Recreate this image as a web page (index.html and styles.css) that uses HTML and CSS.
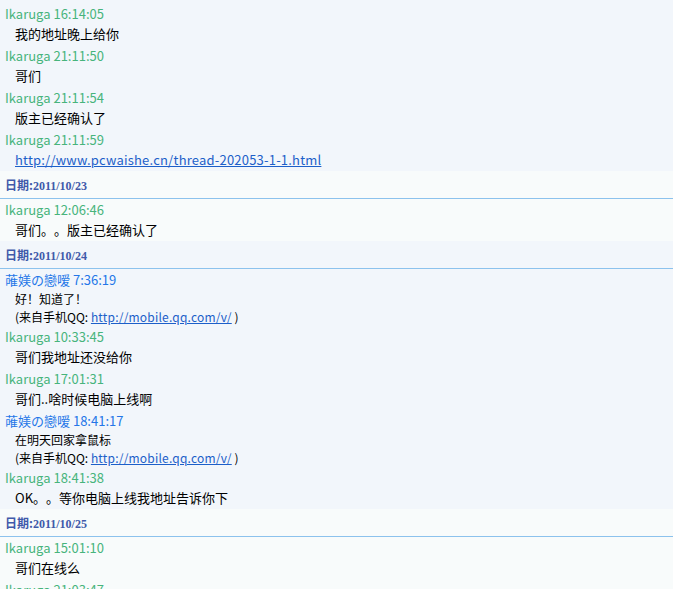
FILE: index.html
```html
<!DOCTYPE html>
<html lang="zh-CN">
<head>
    <meta charset="UTF-8">
    <title>消息记录</title>
    <meta name="viewport" content="width=device-width, initial-scale=1.0">
    <link rel="stylesheet" href="styles.css">
</head>
<body>

<div class="day first">
    <div class="who me">Ikaruga 16:14:05</div>
    <div class="text">我的地址晚上给你</div>
    <div class="who me">Ikaruga 21:11:50</div>
    <div class="text">哥们</div>
    <div class="who me">Ikaruga 21:11:54</div>
    <div class="text">版主已经确认了</div>
    <div class="who me">Ikaruga 21:11:59</div>
    <div class="text"><a href="#">http://www.pcwaishe.cn/thread-202053-1-1.html</a></div>
</div>

<div class="day light">
    <div class="date">日期:<span class="num">2011/10/23</span></div>
    <div class="who me">Ikaruga 12:06:46</div>
    <div class="text">哥们。。版主已经确认了</div>
</div>

<div class="day">
    <div class="date">日期:<span class="num">2011/10/24</span></div>
    <div class="who her">蓶媄の戀嗳 7:36:19</div>
    <div class="text small">
        <div>好！知道了！</div>
        <div>(来自手机QQ: <a href="#">http://mobile.qq.com/v/</a> )</div>
    </div>
    <div class="who me">Ikaruga 10:33:45</div>
    <div class="text">哥们我地址还没给你</div>
    <div class="who me">Ikaruga 17:01:31</div>
    <div class="text">哥们..啥时候电脑上线啊</div>
    <div class="who her">蓶媄の戀嗳 18:41:17</div>
    <div class="text small">
        <div>在明天回家拿鼠标</div>
        <div>(来自手机QQ: <a href="#">http://mobile.qq.com/v/</a> )</div>
    </div>
    <div class="who me">Ikaruga 18:41:38</div>
    <div class="text">OK。。等你电脑上线我地址告诉你下</div>
</div>

<div class="day light">
    <div class="date">日期:<span class="num">2011/10/25</span></div>
    <div class="who me">Ikaruga 15:01:10</div>
    <div class="text">哥们在线么</div>
    <div class="who me">Ikaruga 21:03:47</div>
</div>

</body>
</html>
```

FILE: styles.css
```css
body {
    margin: 0;
    font-family: "Noto Sans CJK SC", sans-serif;
    font-size: 13px;
    color: #000;
    background-color: #f2f6fb;
    overflow: hidden;
    text-spacing-trim: space-all;
}

.day {
    background-color: #f2f6fb;
}

.day.light {
    background-color: #f8fbfb;
}

.day.first {
    padding-top: 3px;
}

.date {
    height: 27px;
    line-height: 27px;
    padding-left: 5px;
    border-bottom: 1px solid #8cc2ed;
    font-size: 12px;
    font-weight: bold;
    color: #4059aa;
}

.date .num {
    font-family: "Liberation Serif", serif;
}

.who {
    height: 21px;
    line-height: 21px;
    padding-left: 5px;
}

.who.me {
    color: #47b47c;
}

.who.her {
    color: #2476e8;
}

.text {
    height: 21px;
    line-height: 20px;
    padding-left: 15px;
}

.text.small {
    height: auto;
    font-size: 12px;
    line-height: 18px;
}

a {
    color: #1d5fc9;
    text-decoration: underline;
    letter-spacing: 0.2px;
}
```
